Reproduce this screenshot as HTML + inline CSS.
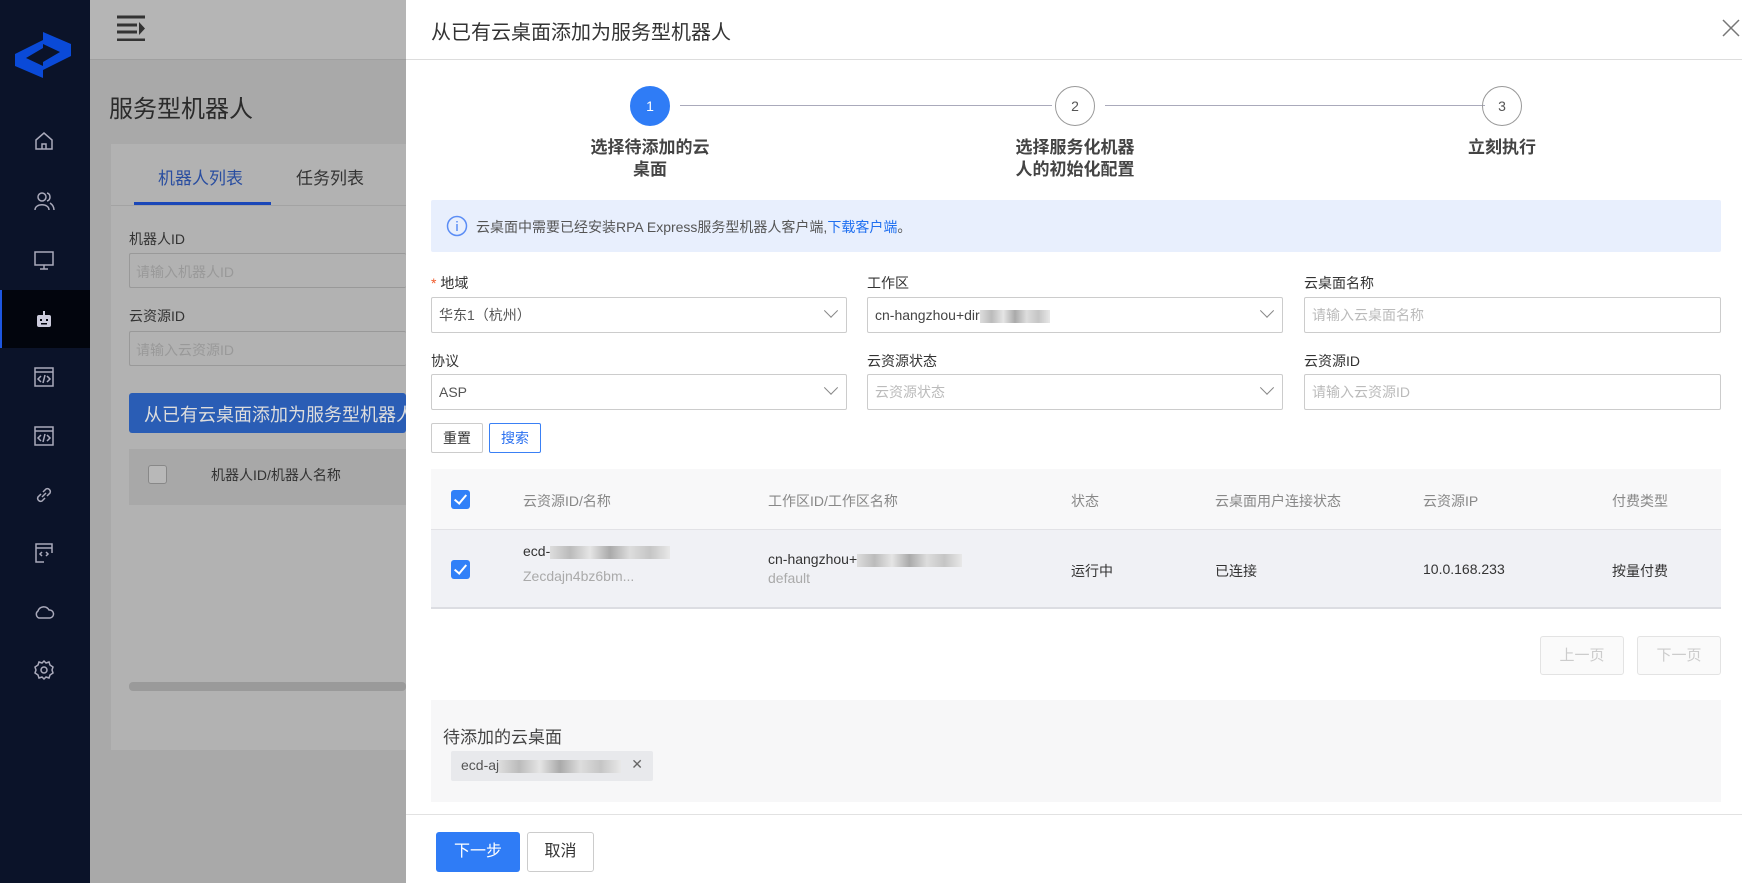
<!DOCTYPE html>
<html><head><meta charset="utf-8"><style>
*{box-sizing:border-box;margin:0;padding:0}
body{width:1742px;height:883px;overflow:hidden;position:relative;font-family:"Liberation Sans","Noto Sans CJK SC",sans-serif;font-size:14px;color:#333;background:#a9a9a9}
.abs{position:absolute}
.side{left:0;top:0;width:90px;height:883px;background:#0b1329}
.ic{position:absolute;left:33px;width:22px;height:22px}
.dlg{left:406px;top:0;width:1336px;height:883px;background:#fff}
.lbl{position:absolute;font-size:14px;color:#333}
.inp{position:absolute;height:36px;border:1px solid #ccc;border-radius:2px;font-size:14px;line-height:34px;padding-left:7px;color:#555}
.ph{color:#bbb}
.chev{position:absolute;right:10px;top:12px;width:10px;height:10px;border-right:1.5px solid #888;border-bottom:1.5px solid #888;transform:rotate(45deg) translate(-3px,-3px)}
.circ{position:absolute;width:40px;height:40px;border-radius:50%;border:1px solid #999;text-align:center;line-height:38px;font-size:14px;color:#555;top:86px}
.step{position:absolute;top:137px;width:130px;text-align:center;font-weight:bold;font-size:17px;line-height:22px;color:#444}
.cb{position:absolute;width:19px;height:19px;background:#3080f8;border-radius:3px}
.cb:after{content:"";position:absolute;left:6px;top:2px;width:5px;height:10px;border-right:2px solid #fff;border-bottom:2px solid #fff;transform:rotate(40deg)}
.blur{display:inline-block;height:13px;background:linear-gradient(90deg,#ddd,#bbb,#e5e5e5,#aaa,#ddd,#c5c5c5,#e8e8e8);vertical-align:middle}
</style></head><body>
<div class="abs side">
<svg class="abs" style="left:14px;top:30px" width="58" height="50" viewBox="0 0 58 50"><path d="M29 2 L57 14 L57 26 L29 40 L29 32 L46 22 L29 14Z M29 48 L1 36 L1 24 L29 10 L29 18 L12 28 L29 36Z" fill="#0a4ad8"/></svg>
<svg class="ic" style="top:130px" viewBox="0 0 22 22" fill="none" stroke="#aab" stroke-width="1.5"><path d="M3 10 L11 3 L19 10 V19 H3Z M9 19 V14 H13 V19"/></svg>
<svg class="ic" style="top:190px" viewBox="0 0 22 22" fill="none" stroke="#aab" stroke-width="1.5"><circle cx="9" cy="7" r="4"/><path d="M2 20 C2 13 16 13 16 20 M14 3 C18 4 18 10 14 11 M17 13 C20 15 21 17 21 20"/></svg>
<svg class="ic" style="top:249px" viewBox="0 0 22 22" fill="none" stroke="#aab" stroke-width="1.5"><rect x="2" y="3" width="18" height="13"/><path d="M7 20 H15 M11 16 V20"/></svg>
<div class="abs" style="left:0;top:290px;width:90px;height:58px;background:#02050d;border-left:2px solid #1d56e0"></div>
<svg class="ic" style="top:308px" viewBox="0 0 22 22" fill="#ccd"><rect x="4" y="7" width="14" height="12" rx="2"/><rect x="10" y="3" width="2" height="4"/><rect x="7" y="11" width="2" height="2" fill="#02050d"/><rect x="13" y="11" width="2" height="2" fill="#02050d"/><rect x="8" y="15" width="6" height="1.5" fill="#02050d"/></svg>
<svg class="ic" style="top:366px" viewBox="0 0 22 22" fill="none" stroke="#aab" stroke-width="1.5"><rect x="2" y="2" width="18" height="18"/><path d="M2 6 H20 M8 10 L5 13 L8 16 M14 10 L17 13 L14 16 M12 9 L10 17"/></svg>
<svg class="ic" style="top:425px" viewBox="0 0 22 22" fill="none" stroke="#aab" stroke-width="1.5"><rect x="2" y="2" width="18" height="18"/><path d="M2 6 H20 M8 10 L5 13 L8 16 M14 10 L17 13 L14 16 M12 9 L10 17"/></svg>
<svg class="ic" style="top:484px" viewBox="0 0 22 22" fill="none" stroke="#aab" stroke-width="1.5"><path d="M9 13 L13 9 M8 10 L5 13 A3 3 0 0 0 9 17 L12 14 M10 8 L13 5 A3 3 0 0 1 17 9 L14 12"/></svg>
<svg class="ic" style="top:542px" viewBox="0 0 22 22" fill="none" stroke="#aab" stroke-width="1.5"><path d="M19 11 V2 H3 V20 H11 M3 6 H19 M9 10 L7 12 L9 14 M13 10 L15 12 L13 14"/></svg>
<svg class="ic" style="top:601px" viewBox="0 0 22 22" fill="none" stroke="#aab" stroke-width="1.5"><path d="M6 17 H17 A4 4 0 0 0 16 9 A6 6 0 0 0 5 10 A4 4 0 0 0 6 17Z"/></svg>
<svg class="ic" style="top:659px" viewBox="0 0 22 22" fill="none" stroke="#aab" stroke-width="1.5"><circle cx="11" cy="11" r="3"/><path d="M11 2 L13 4 L16 3 L17 6 L20 8 L19 11 L20 14 L17 16 L16 19 L13 18 L11 20 L9 18 L6 19 L5 16 L2 14 L3 11 L2 8 L5 6 L6 3 L9 4Z"/></svg>
</div>
<div class="abs" style="left:90px;top:0;width:316px;height:60px;background:#b5b5b5;border-bottom:1px solid #a0a0a0"></div>
<svg class="abs" style="left:116px;top:15px" width="30" height="26" viewBox="0 0 30 26"><path d="M1 2 H29 M1 10 H21 M1 17 H21 M1 25 H29" stroke="#333" stroke-width="3"/><path d="M23 7 L29 13.5 L23 20Z" fill="#333"/></svg>
<div class="abs" style="left:109px;top:89px;font-size:24px;color:#2b2b2b">服务型机器人</div>
<div class="abs" style="left:111px;top:144px;width:295px;height:606px;background:#b2b2b2"></div>
<div class="abs" style="left:111px;top:205px;width:295px;height:1px;background:#a3a3a3"></div>
<div class="abs" style="left:158px;top:164px;font-size:17px;color:#2a4ea0">机器人列表</div>
<div class="abs" style="left:134px;top:202px;width:137px;height:3px;background:#1a47b8"></div>
<div class="abs" style="left:296px;top:164px;font-size:17px;color:#333">任务列表</div>
<div class="abs" style="left:129px;top:229px;font-size:14px;color:#333">机器人ID</div>
<div class="abs" style="left:129px;top:253px;width:277px;height:35px;border:1px solid #999;border-right:none;border-radius:2px;color:#999;padding:8px 6px;font-size:14px">请输入机器人ID</div>
<div class="abs" style="left:129px;top:306px;font-size:14px;color:#333">云资源ID</div>
<div class="abs" style="left:129px;top:331px;width:277px;height:35px;border:1px solid #999;border-right:none;border-radius:2px;color:#999;padding:8px 6px;font-size:14px">请输入云资源ID</div>
<div class="abs" style="left:129px;top:393px;width:277px;height:40px;background:#2a5db5;border-radius:3px;color:#ddd;font-size:18px;padding:8px 15px;white-space:nowrap;overflow:hidden">从已有云桌面添加为服务型机器人</div>
<div class="abs" style="left:129px;top:449px;width:277px;height:56px;background:#a8a8a8"></div>
<div class="abs" style="left:148px;top:465px;width:19px;height:19px;border:1px solid #888;border-radius:3px;background:#b8b8b8"></div>
<div class="abs" style="left:211px;top:465px;font-size:14px;color:#333">机器人ID/机器人名称</div>
<div class="abs" style="left:129px;top:682px;width:277px;height:9px;background:#9a9a9a;border-radius:4px"></div>

<div class="abs dlg">
<div class="abs" style="left:25px;top:16px;font-size:20px;color:#333">从已有云桌面添加为服务型机器人</div>
<svg class="abs" style="left:1316px;top:19px" width="18" height="18" viewBox="0 0 18 18"><path d="M1 1 L17 17 M17 1 L1 17" stroke="#777" stroke-width="1.5"/></svg>
<div class="abs" style="left:0;top:59px;width:1336px;height:1px;background:#ddd"></div>

<div class="circ" style="left:224px;background:#2f7cf6;border-color:#2f7cf6;color:#fff">1</div>
<div class="abs" style="left:274px;top:105px;width:372px;height:1px;background:#aab"></div>
<div class="circ" style="left:649px">2</div>
<div class="abs" style="left:699px;top:105px;width:380px;height:1px;background:#aab"></div>
<div class="circ" style="left:1076px">3</div>
<div class="step" style="left:179px;width:130px">选择待添加的云桌面</div>
<div class="step" style="left:604px;width:130px">选择服务化机器人的初始化配置</div>
<div class="step" style="left:1031px;width:130px">立刻执行</div>

<div class="abs" style="left:25px;top:200px;width:1290px;height:52px;background:#e8effd;border-radius:2px"></div>
<svg class="abs" style="left:40px;top:215px" width="22" height="22" viewBox="0 0 22 22" fill="none" stroke="#5b8df5" stroke-width="1.5"><circle cx="11" cy="11" r="9.5"/><path d="M11 9 V16 M11 6 V7.5"/></svg>
<div class="abs" style="left:70px;top:217px;font-size:14px;color:#555">云桌面中需要已经安装RPA Express服务型机器人客户端,<span style="color:#1f6ff0">下载客户端</span>。</div>

<div class="lbl" style="left:25px;top:273px"><span style="color:#f05a2a">*</span> 地域</div>
<div class="inp" style="left:25px;top:297px;width:416px">华东1（杭州）<span class="chev"></span></div>
<div class="lbl" style="left:461px;top:273px">工作区</div>
<div class="inp" style="left:461px;top:297px;width:416px;color:#444">cn-hangzhou+dir<span class="blur" style="width:70px"></span><span class="chev"></span></div>
<div class="lbl" style="left:898px;top:273px">云桌面名称</div>
<div class="inp ph" style="left:898px;top:297px;width:417px">请输入云桌面名称</div>

<div class="lbl" style="left:25px;top:351px">协议</div>
<div class="inp" style="left:25px;top:374px;width:416px">ASP<span class="chev"></span></div>
<div class="lbl" style="left:461px;top:351px">云资源状态</div>
<div class="inp ph" style="left:461px;top:374px;width:416px">云资源状态<span class="chev"></span></div>
<div class="lbl" style="left:898px;top:351px">云资源ID</div>
<div class="inp ph" style="left:898px;top:374px;width:417px">请输入云资源ID</div>

<div class="abs" style="left:25px;top:423px;width:52px;height:30px;border:1px solid #ccc;border-radius:2px;text-align:center;line-height:28px;font-size:14px;color:#333">重置</div>
<div class="abs" style="left:83px;top:423px;width:52px;height:30px;border:1px solid #3a80f5;border-radius:2px;text-align:center;line-height:28px;font-size:14px;color:#2a70f0">搜索</div>

<div class="abs" style="left:25px;top:469px;width:1290px;height:61px;background:#f8f8f9;border-bottom:1px solid #e2e2e6"></div>
<div class="cb" style="left:45px;top:490px"></div>
<div class="abs" style="left:117px;top:491px;color:#888">云资源ID/名称</div>
<div class="abs" style="left:362px;top:491px;color:#888">工作区ID/工作区名称</div>
<div class="abs" style="left:665px;top:491px;color:#888">状态</div>
<div class="abs" style="left:809px;top:491px;color:#888">云桌面用户连接状态</div>
<div class="abs" style="left:1017px;top:491px;color:#888">云资源IP</div>
<div class="abs" style="left:1206px;top:491px;color:#888">付费类型</div>
<div class="abs" style="left:25px;top:530px;width:1290px;height:79px;background:#f0f1f5;border-bottom:2px solid #dcdde2"></div>
<div class="cb" style="left:45px;top:560px"></div>
<div class="abs" style="left:117px;top:543px;color:#333">ecd-<span class="blur" style="width:120px"></span></div>
<div class="abs" style="left:117px;top:568px;color:#aaa">Zecdajn4bz6bm...</div>
<div class="abs" style="left:362px;top:551px;color:#333">cn-hangzhou+<span class="blur" style="width:105px"></span></div>
<div class="abs" style="left:362px;top:570px;color:#aaa">default</div>
<div class="abs" style="left:665px;top:561px">运行中</div>
<div class="abs" style="left:809px;top:561px">已连接</div>
<div class="abs" style="left:1017px;top:561px">10.0.168.233</div>
<div class="abs" style="left:1206px;top:561px">按量付费</div>

<div class="abs" style="left:1134px;top:636px;width:84px;height:39px;border:1px solid #e3e3e3;border-radius:3px;background:#fafafa;color:#ccc;text-align:center;line-height:37px;font-size:15px">上一页</div>
<div class="abs" style="left:1231px;top:636px;width:84px;height:39px;border:1px solid #e3e3e3;border-radius:3px;background:#fafafa;color:#ccc;text-align:center;line-height:37px;font-size:15px">下一页</div>

<div class="abs" style="left:25px;top:700px;width:1290px;height:102px;background:#f7f7f8"></div>
<div class="abs" style="left:37px;top:723px;font-size:17px;color:#444">待添加的云桌面</div>
<div class="abs" style="left:45px;top:751px;width:202px;height:30px;background:#e8e9ec;border-radius:2px;padding:6px 10px;color:#555">ecd-aj<span class="blur" style="width:122px"></span><span style="position:absolute;right:10px;top:5px;color:#666">✕</span></div>

<div class="abs" style="left:0;top:814px;width:1336px;height:1px;background:#e2e2e2"></div>
<div class="abs" style="left:30px;top:832px;width:84px;height:40px;background:#2f7cf6;border-radius:3px;color:#fff;text-align:center;line-height:40px;font-size:16px">下一步</div>
<div class="abs" style="left:121px;top:832px;width:67px;height:40px;border:1px solid #ccc;border-radius:3px;color:#333;text-align:center;line-height:38px;font-size:16px">取消</div>
</div>
</body></html>
